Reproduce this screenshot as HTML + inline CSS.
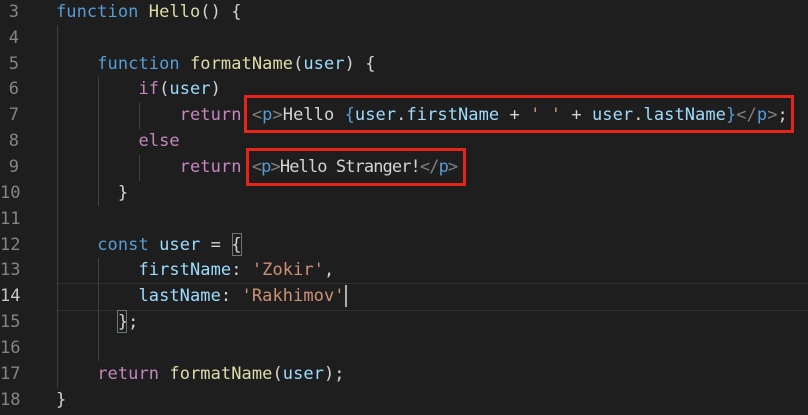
<!DOCTYPE html>
<html><head><style>
html,body{margin:0;padding:0;background:#1e1e1e;width:808px;height:415px;overflow:hidden}
.l{position:absolute;left:0;height:26px;line-height:26px;font-family:"DejaVu Sans Mono","Liberation Mono",monospace;font-size:17px;white-space:pre;color:#d4d4d4;letter-spacing:0.07px}
.n{position:absolute;left:0;width:19px;text-align:right;color:#858585;letter-spacing:0}
.c{position:absolute;left:56px}
.k{color:#569cd6}.f{color:#dcdcaa}.p{color:#c586c0}.v{color:#9cdcfe}.s{color:#ce9178}.t{color:#808080}
.g{position:absolute;width:1px;background:#404040}
.box{position:absolute;border:3px solid #e5251b;box-sizing:border-box}
.bm{position:absolute;border:1px solid #6a7a6a;box-sizing:border-box}
</style></head><body>
<div style="position:absolute;left:55px;right:0;top:283px;height:26px;border-top:1px solid #2e2e2e;border-bottom:1px solid #2e2e2e"></div>
<div class="g" style="left:57px;top:25px;height:363px"></div>
<div class="g" style="left:98px;top:77px;height:129px"></div>
<div class="g" style="left:98px;top:258px;height:103px"></div>
<div class="g" style="left:139px;top:103px;height:26px"></div>
<div class="g" style="left:139px;top:155px;height:26px"></div>

<div class="l" style="top:-1px"><span class="n">3</span><span class="c"><span class="k">function</span> <span class="f">Hello</span>() {</span></div>
<div class="l" style="top:25px"><span class="n">4</span></div>
<div class="l" style="top:51px"><span class="n">5</span><span class="c">    <span class="k">function</span> <span class="f">formatName</span>(<span class="v">user</span>) {</span></div>
<div class="l" style="top:76px"><span class="n">6</span><span class="c">        <span class="p">if</span>(<span class="v">user</span>)</span></div>
<div class="l" style="top:102px"><span class="n">7</span><span class="c">            <span class="p">return</span> <span class="t">&lt;</span><span class="k">p</span><span class="t">&gt;</span>Hello <span class="k">{</span><span class="v">user</span>.<span class="v">firstName</span> + <span class="s">' '</span> + <span class="v">user</span>.<span class="v">lastName</span><span class="k">}</span><span class="t">&lt;/</span><span class="k">p</span><span class="t">&gt;</span>;</span></div>
<div class="l" style="top:128px"><span class="n">8</span><span class="c">        <span class="p">else</span></span></div>
<div class="l" style="top:154px"><span class="n">9</span><span class="c">            <span class="p">return</span> <span style="letter-spacing:-0.9px"><span class="t">&lt;</span><span class="k">p</span><span class="t">&gt;</span>Hello Stranger!<span class="t">&lt;/</span><span class="k">p</span><span class="t">&gt;</span></span></span></div>
<div class="l" style="top:180px"><span class="n">10</span><span class="c">      }</span></div>
<div class="l" style="top:206px"><span class="n">11</span></div>
<div class="l" style="top:232px"><span class="n">12</span><span class="c">    <span class="k">const</span> <span class="v">user</span> = {</span></div>
<div class="l" style="top:257px"><span class="n">13</span><span class="c">        <span class="v">firstName</span>: <span class="s">'Zokir'</span>,</span></div>
<div class="l" style="top:283px"><span class="n" style="color:#c6c6c6">14</span><span class="c">        <span class="v">lastName</span>: <span class="s">'Rakhimov'</span></span></div>
<div class="l" style="top:309px"><span class="n">15</span><span class="c">      };</span></div>
<div class="l" style="top:335px"><span class="n">16</span></div>
<div class="l" style="top:361px"><span class="n">17</span><span class="c">    <span class="p">return</span> <span class="f">formatName</span>(<span class="v">user</span>);</span></div>
<div class="l" style="top:387px"><span class="n">18</span><span class="c">}</span></div>

<div style="position:absolute;left:345px;top:285px;width:2px;height:22px;background:#aeafad"></div>
<div class="bm" style="left:232px;top:233px;width:10px;height:23px"></div>
<div class="bm" style="left:117px;top:310px;width:10px;height:23px"></div>
<div class="box" style="left:244px;top:95px;width:550px;height:38px"></div>
<div class="box" style="left:246px;top:148px;width:220px;height:38px"></div>
</body></html>
